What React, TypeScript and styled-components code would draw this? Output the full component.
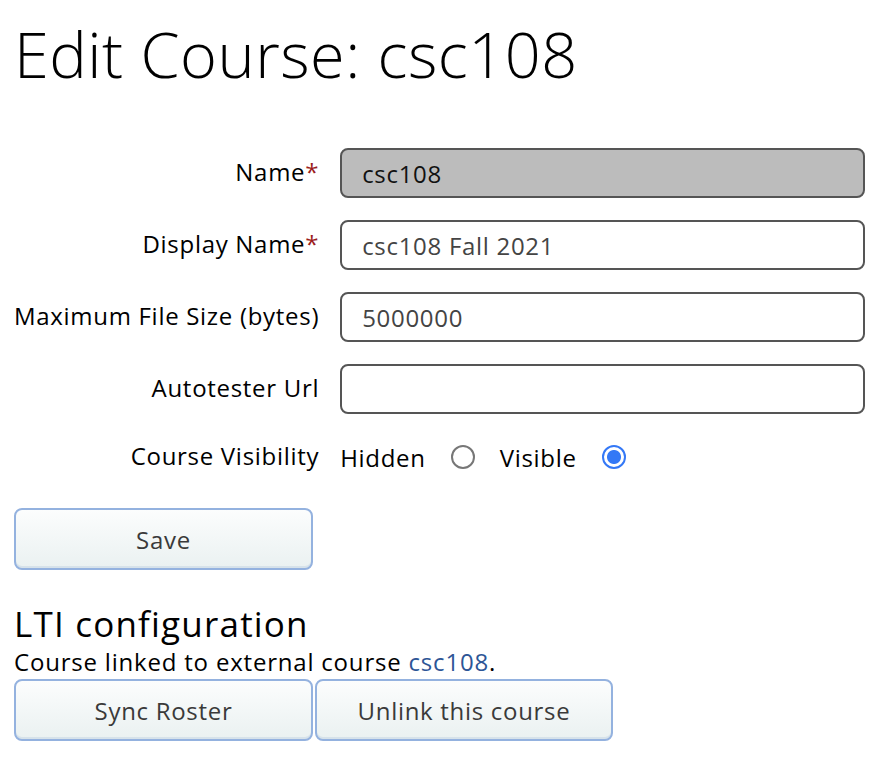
import React, { useState } from "react";
import styled, { createGlobalStyle } from "styled-components";

const GlobalStyle = createGlobalStyle`
  html, body {
    margin: 0;
    padding: 0;
    background: #fff;
  }
  body {
    font-family: "Open Sans", "Liberation Sans", sans-serif;
    font-size: 24px;
    letter-spacing: 0.7px;
    color: #000;
  }
`;

const Page = styled.div`
  padding: 0 11px 0 14px;
`;

const Title = styled.h1`
  font-weight: 300;
  font-size: 63px;
  line-height: 86px;
  letter-spacing: 0.5px;
  margin: 11px 0 51px;
`;

const Form = styled.form`
  display: grid;
  grid-template-columns: auto 1fr;
  column-gap: 21px;
  row-gap: 22px;
  align-items: center;
`;

const Label = styled.label`
  text-align: right;
  white-space: nowrap;
  margin-top: -3px;
`;

const Required = styled.span`
  color: #9b1c1c;
`;

const TextInput = styled.input<{ $readOnly?: boolean }>`
  box-sizing: border-box;
  height: 50px;
  width: 100%;
  border: 2px solid #555;
  border-radius: 8px;
  padding: 0 20px;
  font: inherit;
  letter-spacing: inherit;
  color: ${(p) => (p.$readOnly ? "#111" : "#444")};
  background: ${(p) => (p.$readOnly ? "#bcbcbc" : "#fff")};
  outline: none;
`;

const RadioGroup = styled.div`
  display: flex;
  align-items: center;
  height: 42px;
`;

const RadioLabel = styled.label`
  display: flex;
  align-items: center;
  gap: 25px;
  margin-right: 25px;
`;

const Radio = styled.input`
  appearance: none;
  margin: 0;
  box-sizing: border-box;
  width: 24px;
  height: 24px;
  border-radius: 50%;
  border: 2px solid #777;
  background: #fff;
  &:checked {
    border-color: #3478f6;
    background: radial-gradient(circle, #3478f6 0 6.5px, #fff 7.5px);
  }
`;

const Button = styled.button<{ $width?: number }>`
  box-sizing: border-box;
  width: ${(p) => p.$width ?? 299}px;
  height: 62px;
  border: 2px solid #94b2df;
  border-radius: 8px;
  background: linear-gradient(#fcfdfd, #eaf1f1);
  box-shadow: inset 0 -2px 0 #d6e2ea;
  font: inherit;
  letter-spacing: inherit;
  color: #3a3a3a;
  cursor: pointer;
`;

const SaveRow = styled.div`
  margin-top: 30px;
  display: flex;
`;

const SubTitle = styled.h2`
  font-weight: 400;
  font-size: 35px;
  line-height: 46px;
  letter-spacing: 1.2px;
  margin: 31px 0 0;
`;

const Info = styled.p`
  margin: 0 0 2px;
  line-height: 30px;
  letter-spacing: 0.8px;
`;

const Link = styled.a`
  color: #2d5596;
  text-decoration: none;
`;

const ButtonRow = styled.div`
  display: flex;
  gap: 2px;
`;

export default function App() {
  const [visible, setVisible] = useState(true);
  return (
    <Page>
      <GlobalStyle />
      <Title>Edit Course: csc108</Title>
      <Form onSubmit={(e) => e.preventDefault()}>
        <Label>
          Name<Required>*</Required>
        </Label>
        <TextInput $readOnly readOnly defaultValue="csc108" />
        <Label>
          Display Name<Required>*</Required>
        </Label>
        <TextInput defaultValue="csc108 Fall 2021" />
        <Label>Maximum File Size (bytes)</Label>
        <TextInput defaultValue="5000000" />
        <Label>Autotester Url</Label>
        <TextInput defaultValue="" />
        <Label>Course Visibility</Label>
        <RadioGroup>
          <RadioLabel>
            Hidden
            <Radio type="radio" name="vis" checked={!visible} onChange={() => setVisible(false)} />
          </RadioLabel>
          <RadioLabel>
            Visible
            <Radio type="radio" name="vis" checked={visible} onChange={() => setVisible(true)} />
          </RadioLabel>
        </RadioGroup>
      </Form>
      <SaveRow>
        <Button>Save</Button>
      </SaveRow>
      <SubTitle>LTI configuration</SubTitle>
      <Info>
        Course linked to external course <Link href="#">csc108</Link>.
      </Info>
      <ButtonRow>
        <Button>Sync Roster</Button>
        <Button $width={298}>Unlink this course</Button>
      </ButtonRow>
    </Page>
  );
}
